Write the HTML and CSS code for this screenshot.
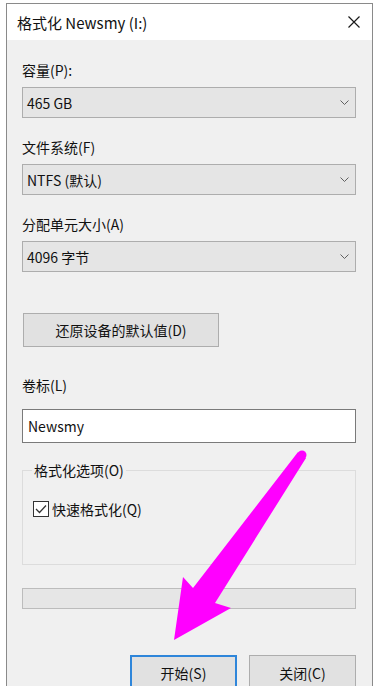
FILE: index.html
```html
<!DOCTYPE html>
<html lang="zh-CN">
<head>
    <meta charset="UTF-8">
    <meta name="viewport" content="width=device-width, initial-scale=1.0">
    <title>格式化 Newsmy (I:)</title>
    <link rel="stylesheet" href="styles.css">
</head>
<body>
    <div class="dialog">
        <div class="titlebar">
            <span class="title">格式化 Newsmy (I:)</span>
            <svg class="close" width="12" height="12" viewBox="0 0 12 12">
                <path d="M0.5 0.5 L11.5 11.5 M11.5 0.5 L0.5 11.5" stroke="#1a1a1a" stroke-width="1.2" fill="none"/>
            </svg>
        </div>
        <div class="content">
            <div class="label">容量(P):</div>
            <div class="combo">
                <span>465 GB</span>
                <svg class="chevron" width="9" height="5" viewBox="0 0 9 5"><path d="M0.5 0.5 L4.5 4.5 L8.5 0.5" stroke="#606060" fill="none"/></svg>
            </div>

            <div class="label">文件系统(F)</div>
            <div class="combo">
                <span>NTFS (默认)</span>
                <svg class="chevron" width="9" height="5" viewBox="0 0 9 5"><path d="M0.5 0.5 L4.5 4.5 L8.5 0.5" stroke="#606060" fill="none"/></svg>
            </div>

            <div class="label">分配单元大小(A)</div>
            <div class="combo">
                <span>4096 字节</span>
                <svg class="chevron" width="9" height="5" viewBox="0 0 9 5"><path d="M0.5 0.5 L4.5 4.5 L8.5 0.5" stroke="#606060" fill="none"/></svg>
            </div>

            <button class="btn restore">还原设备的默认值(D)</button>

            <div class="label volume-label">卷标(L)</div>
            <div class="textbox">Newsmy</div>

            <div class="group">
                <span class="group-title">格式化选项(O)</span>
                <label class="check-row">
                    <svg class="checkbox" width="16" height="16" viewBox="0 0 16 16">
                        <rect x="0.5" y="0.5" width="15" height="15" fill="#fff" stroke="#333"/>
                        <path d="M3 8 L6.5 11.5 L13 4.5" stroke="#333" stroke-width="1.3" fill="none"/>
                    </svg>
                    <span>快速格式化(Q)</span>
                </label>
            </div>

            <div class="progress"></div>

            <div class="actions">
                <button class="btn primary">开始(S)</button>
                <button class="btn">关闭(C)</button>
            </div>
        </div>
    </div>

    <!-- 提示箭头 -->
    <svg class="arrow" width="382" height="686" viewBox="0 0 382 686">
        <polygon points="298,452 193,588 183,577 174,640 231,608 215,603 306,458" fill="#ff00ff"/>
        <circle cx="302" cy="455" r="4.5" fill="#ff00ff"/>
    </svg>
</body>
</html>
```

FILE: styles.css
```css
body {
    margin: 0;
    background: #fff;
    font-family: "Noto Sans CJK SC", "Noto Sans", sans-serif;
    color: #111;
    position: relative;
    height: 686px;
    overflow: hidden;
}
.dialog {
    margin: 3px 0 0 6px;
    width: 365px;
    height: 700px;
    border: 1px solid #8a8a8a;
    background: #f0f0f0;
}
.titlebar {
    height: 36px;
    background: #fff;
    display: flex;
    align-items: center;
    justify-content: space-between;
    padding: 0 12px 0 10px;
}
.title {
    font-size: 15px;
}
.content {
    padding: 20px 16px 0 15px;
}
.label {
    font-size: 14px;
    line-height: 20px;
    margin-bottom: 7px;
}
.combo {
    height: 31px;
    box-sizing: border-box;
    border: 1px solid #adadad;
    background: #e5e5e5;
    display: flex;
    align-items: center;
    justify-content: space-between;
    padding: 0 6px 0 4px;
    font-size: 14px;
    margin-bottom: 19px;
}
.btn {
    font-family: inherit;
    font-size: 14px;
    color: #111;
    background: #e1e1e1;
    border: 1px solid #adadad;
    padding: 0;
    height: 36px;
    width: 107px;
}
.restore {
    display: block;
    width: 196px;
    height: 34px;
    margin: 41px 0 0 1px;
}
.volume-label {
    margin-top: 28px;
    margin-bottom: 14px;
}
.textbox {
    height: 34px;
    box-sizing: border-box;
    border: 1px solid #7a7a7a;
    background: #fff;
    font-size: 14px;
    line-height: 32px;
    padding-left: 5px;
}
.group {
    margin-top: 27px;
    height: 95px;
    box-sizing: border-box;
    border: 1px solid #dcdcdc;
    font-size: 14px;
    line-height: 20px;
}
.group-title {
    display: inline-block;
    margin: -11px 0 0 9px;
    padding: 0 2px;
    background: #f0f0f0;
    vertical-align: top;
}
.check-row {
    display: flex;
    align-items: center;
    gap: 3px;
    margin: 8px 0 0 10px;
}
.progress {
    margin-top: 23px;
    height: 21px;
    box-sizing: border-box;
    border: 1px solid #bcbcbc;
    background: #e6e6e6;
}
.actions {
    display: flex;
    justify-content: flex-end;
    gap: 12px;
    margin-top: 46px;
}
.primary {
    border: 2px solid #2f86da;
}
.arrow {
    position: absolute;
    left: 0;
    top: 0;
    pointer-events: none;
}
```
